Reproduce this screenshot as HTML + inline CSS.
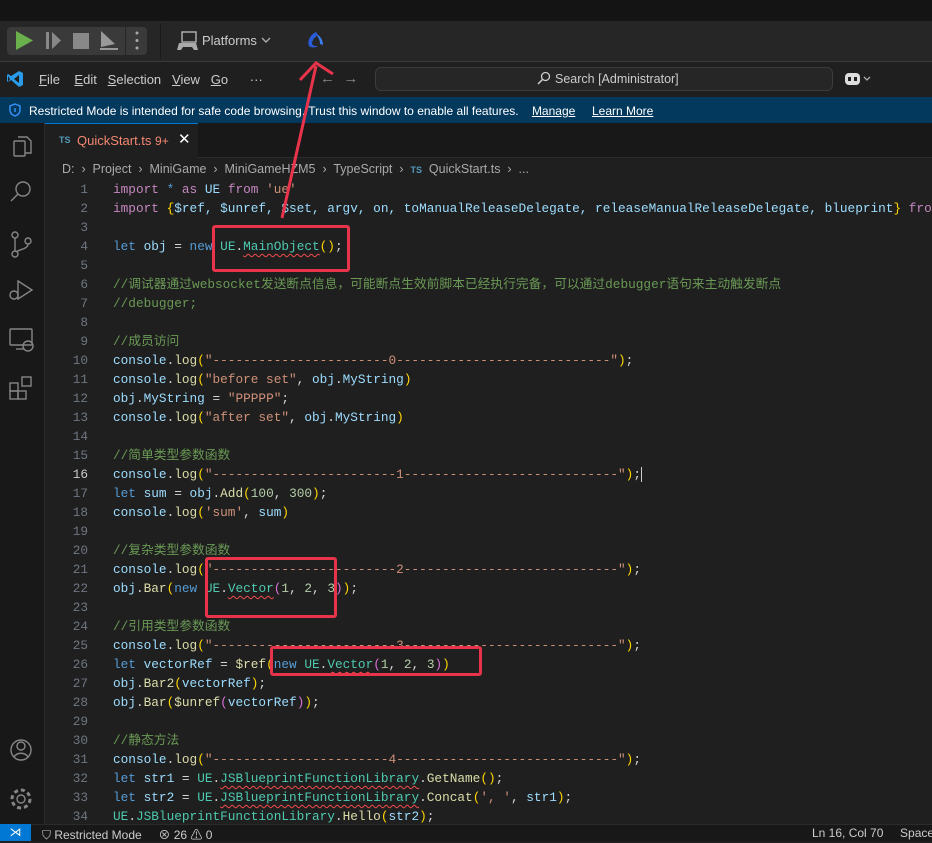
<!DOCTYPE html>
<html><head><meta charset="utf-8"><style>
*{margin:0;padding:0;box-sizing:border-box}
body{width:932px;height:841px;overflow:hidden;background:#1f1f1f;font-family:"Liberation Sans","Noto Sans CJK SC",sans-serif;color:#ccc;position:relative}
.abs{position:absolute}
.code{position:absolute;left:113px;top:180px;font-family:"Liberation Mono","Noto Sans CJK SC",monospace;font-size:12.75px;line-height:19px;white-space:pre;color:#9cdcfe}
.ln{position:absolute;left:44px;width:44px;top:180px;text-align:right;font-family:"Liberation Mono",monospace;font-size:12.75px;line-height:19px;color:#6e7681;white-space:pre}
.k{color:#c586c0}.b{color:#569cd6}.v{color:#9cdcfe}.f{color:#dcdcaa}.s{color:#ce9178}.c{color:#6a9955}.n{color:#b5cea8}.t{color:#4ec9b0}.y{color:#ffd700}.p{color:#da70d6}.q{color:#179fff}.w{color:#d4d4d4}
.sq{text-decoration:underline wavy #f14c4c;text-decoration-thickness:1px;text-underline-offset:3px}
.red{position:absolute;border:3px solid #e8344a;border-radius:3px}
</style></head><body>
<div class="abs" style="left:0;top:0;width:932px;height:21px;background:#141414"></div>
<div class="abs" style="left:0;top:21px;width:932px;height:40px;background:#262626"></div>
<div class="abs" style="left:7px;top:27px;width:140px;height:28px;background:#3a3a3a;border-radius:4px"></div>
<div class="abs" style="left:125px;top:27px;width:1px;height:28px;background:#262626"></div>
<svg class="abs" style="left:0;top:21px" width="330" height="40">
<polygon points="16,10 16,29 33,19.5" fill="#6ab04c"/>
<rect x="46" y="11" width="3" height="17" fill="#888"/><polygon points="52,11 52,28 61,19.5" fill="#888"/>
<rect x="73" y="12" width="16" height="16" fill="#888"/>
<polygon points="101,10 101,26 115,23" fill="#999"/><rect x="100" y="27" width="18" height="2" fill="#999"/>
<circle cx="137" cy="12" r="1.5" fill="#aaa"/><circle cx="137" cy="19.5" r="1.5" fill="#aaa"/><circle cx="137" cy="27" r="1.5" fill="#aaa"/>
<rect x="160" y="2" width="1" height="36" fill="#1a1a1a"/>
<rect x="182" y="11" width="14" height="10" fill="none" stroke="#aaa" stroke-width="1.5"/>
<path d="M179 22h17l2 7h-4l-2-3h-9l-2 3h-4z" fill="#aaa"/>
<path d="M262 17l4 4 4-4" stroke="#aaa" fill="none" stroke-width="1.4"/>
<path d="M316 11c-6 3-9 9-7 14c2 2 6 2 9 0c-2 0-5 0-6-2c0-4 3-7 6-9z" fill="#2a5bd7"/>
<path d="M318 14c3 2 5 6 5 10l-3-1c0-3-1-6-3-8z" fill="#3b7ef0"/>
</svg>
<div class="abs" style="left:202px;top:33px;font-size:13px;color:#ccc">Platforms</div>
<div class="abs" style="left:0;top:61px;width:932px;height:1px;background:#3a3a3a"></div>
<div class="abs" style="left:0;top:62px;width:932px;height:35px;background:#1f1f1f"></div>
<svg class="abs" style="left:6px;top:70px" width="18" height="18"><path d="M13 1l4 2v12l-4 2-8-7-3 2-1-1v-6l1-1 3 2zM13 5l-5 4 5 4z M2 6v6l2-3z" fill="#2a9be8"/></svg>
<div class="abs" style="left:39px;top:72px;font-size:13px;color:#ccc;white-space:pre"><u>F</u>ile    <u>E</u>dit   <u>S</u>election   <u>V</u>iew   <u>G</u>o      ···</div>
<div class="abs" style="left:320px;top:70px;font-size:15px;color:#888">←&nbsp;&nbsp;→</div>
<div class="abs" style="left:375px;top:67px;width:458px;height:24px;border:1px solid #3c3c3c;border-radius:6px;background:#262626"></div>
<svg class="abs" style="left:537px;top:71px" width="14" height="14"><circle cx="8.5" cy="5.5" r="4" fill="none" stroke="#ccc" stroke-width="1.3"/><path d="M5.5 8.5L1 13" stroke="#ccc" stroke-width="1.5"/></svg>
<div class="abs" style="left:555px;top:72px;font-size:12.5px;color:#ccc">Search [Administrator]</div>
<svg class="abs" style="left:844px;top:70px" width="32" height="18"><rect x="1" y="3" width="15" height="12" rx="4" fill="#ddd"/><rect x="4" y="7" width="3" height="4" fill="#1f1f1f"/><rect x="10" y="7" width="3" height="4" fill="#1f1f1f"/><path d="M20 7l3 3 3-3" stroke="#aaa" fill="none" stroke-width="1.3"/></svg>
<div class="abs" style="left:0;top:97px;width:932px;height:26px;background:#04395e"></div>
<svg class="abs" style="left:8px;top:103px" width="14" height="14"><path d="M7 1l5 2v4c0 3-2 5-5 6c-3-1-5-3-5-6V3z" fill="none" stroke="#3794ff" stroke-width="1.4"/><rect x="6.3" y="5" width="1.4" height="4" fill="#3794ff"/></svg>
<div class="abs" style="left:29px;top:104px;font-size:12px;color:#fff;white-space:pre">Restricted Mode is intended for safe code browsing. Trust this window to enable all features.    <u>Manage</u>     <u>Learn More</u></div>
<div class="abs" style="left:0;top:123px;width:45px;height:701px;background:#181818;border-right:1px solid #2b2b2b"></div>
<svg class="abs" style="left:0;top:123px" width="45" height="700">
<g fill="none" stroke="#868686" stroke-width="1.4">
<rect x="14" y="18" width="11" height="15" rx="1"/><path d="M18 14h9l4 4v12h-6"/>
<circle cx="23" cy="66" r="7"/><path d="M18 71l-7 7"/>
<circle cx="15" cy="112" r="3"/><circle cx="15" cy="131" r="3"/><circle cx="28" cy="118" r="3"/><path d="M15 115v13M28 121c0 5-8 5-12 8"/>
<path d="M18 158l14 9-14 9z"/><circle cx="14" cy="172" r="4"/>
<rect x="10" y="206" width="22" height="16" rx="1"/><path d="M16 226h8"/><circle cx="28" cy="223" r="5"/>
<rect x="10" y="260" width="8" height="8"/><rect x="10" y="268" width="8" height="8"/><rect x="18" y="268" width="8" height="8"/><rect x="22" y="254" width="9" height="9"/>
<circle cx="21" cy="627" r="10"/><circle cx="21" cy="623" r="4"/><path d="M14 634c3-5 11-5 14 0"/>
<circle cx="21" cy="676" r="4"/><circle cx="21" cy="676" r="9" stroke-dasharray="4 3" stroke-width="3"/>
</g></svg>
<div class="abs" style="left:45px;top:123px;width:887px;height:35px;background:#181818;border-bottom:1px solid #2b2b2b"></div>
<div class="abs" style="left:45px;top:123px;width:153px;height:35px;background:#1f1f1f;border-top:1px solid #0078d4"></div>
<div class="abs" style="left:59px;top:135px;font-size:9px;font-weight:bold;color:#519aba">TS</div>
<div class="abs" style="left:77px;top:133px;font-size:13px;color:#f48771">QuickStart.ts <span style="font-size:12px">9+</span></div>
<div class="abs" style="left:178px;top:130px;font-size:15px;color:#fff">✕</div>
<div class="abs" style="left:62px;top:162px;font-size:12.5px;color:#aaa;white-space:pre">D:  ›  Project  ›  MiniGame  ›  MiniGameHZM5  ›  TypeScript  ›  <b style="font-size:9px;color:#519aba">TS</b>  QuickStart.ts  ›  ...</div>
<div class="ln">1
2
3
4
5
6
7
8
9
10
11
12
13
14
15
<span style="color:#ccc">16</span>
17
18
19
20
21
22
23
24
25
26
27
28
29
30
31
32
33
34</div>
<div class="code"><span class="k">import</span> <span class="b">*</span> <span class="k">as</span> <span class="v">UE</span> <span class="k">from</span> <span class="s">'ue'</span>
<span class="k">import</span> <span class="y">{</span>$ref, $unref, $set, argv, on, toManualReleaseDelegate, releaseManualReleaseDelegate, blueprint<span class="y">}</span> <span class="k">from</span>

<span class="b">let</span> obj <span class="w">=</span> <span class="b">new</span> <span class="t">UE</span><span class="w">.</span><span class="t sq">MainObject</span><span class="y">()</span><span class="w">;</span>

<span class="c">//调试器通过websocket发送断点信息，可能断点生效前脚本已经执行完备，可以通过debugger语句来主动触发断点</span>
<span class="c">//debugger;</span>

<span class="c">//成员访问</span>
console<span class="w">.</span><span class="f">log</span><span class="y">(</span><span class="s">"-----------------------0----------------------------"</span><span class="y">)</span><span class="w">;</span>
console<span class="w">.</span><span class="f">log</span><span class="y">(</span><span class="s">"before set"</span><span class="w">,</span> obj<span class="w">.</span>MyString<span class="y">)</span>
obj<span class="w">.</span>MyString <span class="w">=</span> <span class="s">"PPPPP"</span><span class="w">;</span>
console<span class="w">.</span><span class="f">log</span><span class="y">(</span><span class="s">"after set"</span><span class="w">,</span> obj<span class="w">.</span>MyString<span class="y">)</span>

<span class="c">//简单类型参数函数</span>
console<span class="w">.</span><span class="f">log</span><span class="y">(</span><span class="s">"------------------------1----------------------------"</span><span class="y">)</span><span class="w">;</span><span style="border-left:1px solid #ccc"></span>
<span class="b">let</span> sum <span class="w">=</span> obj<span class="w">.</span><span class="f">Add</span><span class="y">(</span><span class="n">100</span><span class="w">,</span> <span class="n">300</span><span class="y">)</span><span class="w">;</span>
console<span class="w">.</span><span class="f">log</span><span class="y">(</span><span class="s">'sum'</span><span class="w">,</span> sum<span class="y">)</span>

<span class="c">//复杂类型参数函数</span>
console<span class="w">.</span><span class="f">log</span><span class="y">(</span><span class="s">"------------------------2----------------------------"</span><span class="y">)</span><span class="w">;</span>
obj<span class="w">.</span><span class="f">Bar</span><span class="y">(</span><span class="b">new</span> <span class="t">UE</span><span class="w">.</span><span class="t sq">Vector</span><span class="p">(</span><span class="n">1</span><span class="w">,</span> <span class="n">2</span><span class="w">,</span> <span class="n">3</span><span class="p">)</span><span class="y">)</span><span class="w">;</span>

<span class="c">//引用类型参数函数</span>
console<span class="w">.</span><span class="f">log</span><span class="y">(</span><span class="s">"------------------------3----------------------------"</span><span class="y">)</span><span class="w">;</span>
<span class="b">let</span> vectorRef <span class="w">=</span> <span class="f">$ref</span><span class="y">(</span><span class="b">new</span> <span class="t">UE</span><span class="w">.</span><span class="t sq">Vector</span><span class="p">(</span><span class="n">1</span><span class="w">,</span> <span class="n">2</span><span class="w">,</span> <span class="n">3</span><span class="p">)</span><span class="y">)</span>
obj<span class="w">.</span><span class="f">Bar2</span><span class="y">(</span>vectorRef<span class="y">)</span><span class="w">;</span>
obj<span class="w">.</span><span class="f">Bar</span><span class="y">(</span><span class="f">$unref</span><span class="p">(</span>vectorRef<span class="p">)</span><span class="y">)</span><span class="w">;</span>

<span class="c">//静态方法</span>
console<span class="w">.</span><span class="f">log</span><span class="y">(</span><span class="s">"-----------------------4-----------------------------"</span><span class="y">)</span><span class="w">;</span>
<span class="b">let</span> str1 <span class="w">=</span> <span class="t">UE</span><span class="w">.</span><span class="t sq">JSBlueprintFunctionLibrary</span><span class="w">.</span><span class="f">GetName</span><span class="y">()</span><span class="w">;</span>
<span class="b">let</span> str2 <span class="w">=</span> <span class="t">UE</span><span class="w">.</span><span class="t sq">JSBlueprintFunctionLibrary</span><span class="w">.</span><span class="f">Concat</span><span class="y">(</span><span class="s">', '</span><span class="w">,</span> str1<span class="y">)</span><span class="w">;</span>
<span class="t">UE</span><span class="w">.</span><span class="t">JSBlueprintFunctionLibrary</span><span class="w">.</span><span class="f">Hello</span><span class="y">(</span>str2<span class="y">)</span><span class="w">;</span></div>
<div class="red" style="left:212px;top:225px;width:138px;height:47px"></div>
<div class="red" style="left:205px;top:557px;width:132px;height:61px"></div>
<div class="red" style="left:270px;top:646px;width:212px;height:30px"></div>
<svg class="abs" style="left:0;top:0" width="932" height="841"><path d="M282 218L316 66" stroke="#e8344a" stroke-width="3"/><path d="M300 80L316 63L333 74" stroke="#e8344a" stroke-width="3" fill="none"/></svg>
<div class="abs" style="left:0;top:824px;width:932px;height:17px;background:#181818;border-top:1px solid #2b2b2b"></div>
<div class="abs" style="left:0;top:824px;width:31px;height:17px;background:#0078d4;color:#fff;font-size:12px;text-align:center;line-height:17px">⋊</div>
<div class="abs" style="left:42px;top:826px;font-size:12px;color:#ccc;white-space:pre">⛉ Restricted Mode     ⊗ 26 ⚠ 0</div>
<div class="abs" style="left:812px;top:826px;font-size:12px;color:#ccc;white-space:pre">Ln 16, Col 70     Spaces</div>
</body></html>
